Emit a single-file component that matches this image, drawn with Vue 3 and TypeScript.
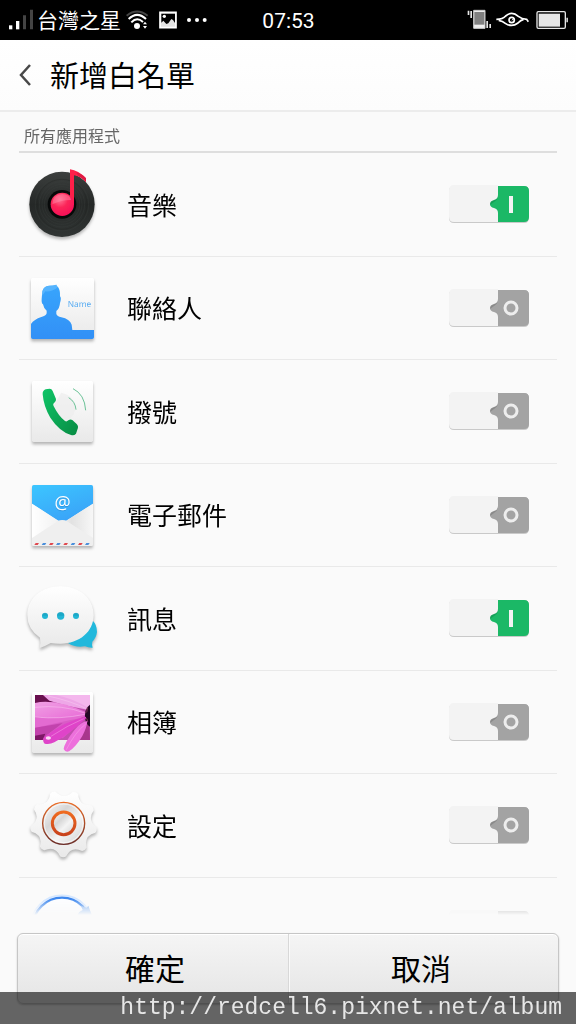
<script setup lang="ts">
import { ref } from 'vue'

type IconName = 'music' | 'contacts' | 'phone' | 'mail' | 'messages' | 'album' | 'settings' | 'browser'

interface AppEntry {
  icon: IconName
  name: string
  viewBox: string
  allowed: boolean
}

const apps = ref<AppEntry[]>([
  { icon: 'music', name: '音樂', viewBox: '9 15 264 264', allowed: true },
  { icon: 'contacts', name: '聯絡人', viewBox: '9 9 264 264', allowed: false },
  { icon: 'phone', name: '撥號', viewBox: '9 6 264 264', allowed: false },
  { icon: 'mail', name: '電子郵件', viewBox: '9 6 264 264', allowed: false },
  { icon: 'messages', name: '訊息', viewBox: '9 6 264 264', allowed: true },
  { icon: 'album', name: '相簿', viewBox: '9 6 264 264', allowed: false },
  { icon: 'settings', name: '設定', viewBox: '9 6 264 264', allowed: false },
  { icon: 'browser', name: '', viewBox: '9 318 264 264', allowed: false },
])

function polar(radius: number, degrees: number): string {
  const a = (degrees * Math.PI) / 180
  return `${(143 + radius * Math.cos(a)).toFixed(1)} ${(131 + radius * Math.sin(a)).toFixed(1)}`
}

function gearOutline(teeth: number): string {
  const step = 360 / teeth
  let d = `M${polar(99, 91 - 5)}`
  for (let i = 0; i < teeth; i++) {
    const tip = 91 + i * step
    d += `Q${polar(103, tip)} ${polar(99, tip + 5)}`
    d += `Q${polar(70, tip + step / 2)} ${polar(99, tip + step - 5)}`
  }
  return d + 'Z'
}

const gear = gearOutline(9)
const stamps = [62, 84, 106, 127, 149, 171, 193, 214]
</script>

<template>
  <div class="screen">
    <div class="status">
      <div class="status-side">
        <svg width="24" height="40" viewBox="27 0 72 120" aria-hidden="true">
          <path d="M27 76h10v12H27z" fill="#fff" />
          <path d="M48 63h10v25H48z" fill="#fff" />
          <path d="M69 46h9v42h-9zM90 29h9v59h-9z" fill="#444" />
        </svg>
        <span class="carrier">台灣之星</span>
        <svg width="24" height="40" viewBox="375 0 72 120" fill="none" aria-hidden="true">
          <path d="M380 47Q411 22 443 47" stroke="#444" stroke-width="6" />
          <path d="M386 57Q411 32 438 57" stroke="#fff" stroke-width="6" />
          <path d="M394 67Q411 49 429 66" stroke="#fff" stroke-width="6" />
          <circle cx="411" cy="78" r="9" fill="#fff" />
          <path d="M429 73l6-8 6 8zM429 78l6 8 6-8z" fill="#fff" />
        </svg>
        <svg width="28" height="40" viewBox="459 0 84 120" aria-hidden="true">
          <path d="M480 37h48v46h-48z" fill="#e4e4e4" stroke="#fff" stroke-width="5" />
          <path d="M484 41h41v28l-6-9-5-3-9 13-6 2-9-10-6 6z" fill="#000" />
          <circle cx="493" cy="49" r="5" fill="#fff" />
        </svg>
        <svg width="24" height="40" viewBox="555 0 72 120" fill="#fff" aria-hidden="true">
          <circle cx="567" cy="60" r="6" /><circle cx="591" cy="60" r="6" /><circle cx="614" cy="60" r="6" />
        </svg>
      </div>
      <time class="clock">07:53</time>
      <div class="status-side status-end">
        <svg width="26" height="40" viewBox="534 0 78 120" aria-hidden="true">
          <path d="M557 31h34v54h-34z" fill="#eee" stroke="#ccc" stroke-width="3" />
          <path d="M559 36h30v38h-30z" fill="#808080" />
          <path d="M539 32h5v13h-5zM547 33h5v21h-5zM595 63h5v21h-5zM604 72h5v12h-5z" fill="#e6e6e6" />
        </svg>
        <svg width="34" height="40" viewBox="624 0 102 120" fill="none" stroke="#fff" aria-hidden="true">
          <path d="M625 58Q645 58 653 48Q672 32 691 49Q701 57 716 58L721 65" stroke-width="5" />
          <path d="M632 61Q644 63 652 70Q671 83 690 69Q698 60 707 58" stroke-width="5" />
          <circle cx="671" cy="60" r="8" stroke-width="5" />
          <path d="M672 61l6-7" stroke-width="3" />
        </svg>
        <svg width="34" height="40" viewBox="738 0 102 120" aria-hidden="true">
          <rect x="747" y="35" width="85" height="50" rx="4" fill="#000" stroke="#e6e6e6" stroke-width="4" />
          <path d="M752 41h64v39h-64z" fill="#e6e6e6" />
          <path d="M835 53h5v14h-5z" fill="#ccc" />
        </svg>
      </div>
    </div>

    <header class="title-bar">
      <button class="back" type="button" aria-label="返回">
        <svg width="14" height="24" viewBox="0 0 14 24" fill="none" stroke="#484848" stroke-width="2.5" aria-hidden="true">
          <path d="M12 2L3 12L12 22" />
        </svg>
      </button>
      <h1>新增白名單</h1>
    </header>

    <main class="content">
      <h2>所有應用程式</h2>
      <ul class="apps">
        <li v-for="app in apps" :key="app.icon" class="app">
          <svg class="app-icon" width="88" height="88" :viewBox="app.viewBox" aria-hidden="true">
            <g v-if="app.icon === 'music'">
              <defs>
                <linearGradient id="vinyl" x1="0" y1="0" x2="0" y2="1">
                  <stop offset="0" stop-color="#3c3f3e" /><stop offset=".5" stop-color="#252827" /><stop offset="1" stop-color="#303433" />
                </linearGradient>
                <radialGradient id="ball" cx=".4" cy=".3" r=".75">
                  <stop offset="0" stop-color="#ff6f92" /><stop offset=".45" stop-color="#fb2558" /><stop offset="1" stop-color="#f50d57" />
                </radialGradient>
              </defs>
              <circle class="shadow" cx="138" cy="145" r="98" fill="url(#vinyl)" />
              <g fill="none" stroke="#3b3f3e">
                <circle cx="138" cy="145" r="80" /><circle cx="138" cy="145" r="75" stroke="#1d201f" />
                <circle cx="138" cy="145" r="68" /><circle cx="138" cy="145" r="60" /><circle cx="138" cy="145" r="53" />
              </g>
              <circle cx="138" cy="145" r="43" fill="#070909" />
              <path d="M162 40Q187 43 210 67V78Q194 61 174 58V145H162z" fill="#ff1f49" />
              <path d="M180 49Q197 53 210 67V78Q198 65 188 61z" fill="#df1a43" />
              <circle cx="139" cy="145" r="35" fill="url(#ball)" />
              <path d="M109 145Q109 116 139 114Q163 115 165 132Q136 132 109 145z" fill="#ff8eaa" opacity=".45" />
            </g>

            <g v-else-if="app.icon === 'contacts'">
              <defs>
                <linearGradient id="person" x1="0" y1="0" x2="0" y2="1">
                  <stop offset="0" stop-color="#38a5fc" /><stop offset="1" stop-color="#3290f6" />
                </linearGradient>
              </defs>
              <rect class="shadow" x="45" y="48" width="189" height="183" rx="5" fill="url(#paper)" />
              <path
                d="M45 186Q54 172 76 165Q90 162 92 154V146Q83 139 81 127Q76 124 77 110L79 88Q82 73 99 71Q111 71 121 68Q122 73 126 75Q133 84 132 103Q137 108 132 123Q131 139 121 147V156Q123 163 136 166Q161 171 167 188Q168 196 169 204H234V226Q234 231 229 231H50Q45 231 45 226z"
                fill="url(#person)"
              />
              <path d="M79 101Q76 73 99 71Q112 71 121 68Q122 73 126 75Q109 90 88 88z" fill="#65bdff" opacity=".65" />
              <text x="155" y="136" class="card-name">Name</text>
            </g>

            <g v-else-if="app.icon === 'phone'">
              <defs>
                <linearGradient id="handset" x1="0" y1="0" x2="1" y2="1">
                  <stop offset="0" stop-color="#10c568" /><stop offset="1" stop-color="#078b43" />
                </linearGradient>
              </defs>
              <rect class="shadow" x="48" y="45" width="183" height="183" rx="5" fill="url(#paper)" />
              <path d="M136 80Q170 87 178 118Q181 149 152 163Q121 149 112 121z" fill="#ececec" opacity=".7" />
              <path
                d="M89 70L101 68Q107 68 110 75L120 99Q121 105 115 110Q109 113 114 122Q128 150 147 165Q152 168 157 163Q163 158 169 162L182 174Q189 181 184 191L180 203Q174 210 165 207Q130 196 103 155Q83 122 80 85Q79 74 89 70z"
                fill="url(#handset)"
              />
              <g fill="none" stroke="#6cc398" stroke-width="3">
                <path d="M158 95Q178 107 180 131" /><path d="M171 68Q206 85 209 133" />
              </g>
            </g>

            <g v-else-if="app.icon === 'mail'">
              <defs>
                <linearGradient id="sky" x1="0" y1="0" x2="0.5" y2="1">
                  <stop offset="0" stop-color="#3cc6ff" /><stop offset="1" stop-color="#3aa3f8" />
                </linearGradient>
                <linearGradient id="flap" x1="0" y1="0" x2="1" y2="0">
                  <stop offset="0" stop-color="#fff" /><stop offset=".45" stop-color="#f1f1f1" /><stop offset=".65" stop-color="#e2e2e2" /><stop offset="1" stop-color="#f7f7f7" />
                </linearGradient>
              </defs>
              <rect class="shadow" x="48" y="45" width="183" height="183" rx="5" fill="#f2f2f2" />
              <path d="M53 45H226Q231 45 231 50V101L139 160L48 101V50Q48 45 53 45z" fill="url(#sky)" />
              <path d="M48 101L126 152H151L231 101V204H48z" fill="url(#flap)" />
              <path d="M48 204L126 153Q139 147 152 153L231 204V223Q231 228 226 228H53Q48 228 48 223z" fill="#efefef" />
              <text x="140" y="119" class="at-shadow">@</text>
              <text x="140" y="117" class="at">@</text>
              <path
                v-for="(x, i) in stamps"
                :key="x"
                :d="`M${x - 3} 219h10l-4 6h-10z`"
                :fill="i % 2 ? '#4a8fdb' : '#e0484e'"
              />
            </g>

            <g v-else-if="app.icon === 'messages'">
              <g class="shadow">
                <path d="M229 142Q243 155 243 177Q241 194 229 206Q227 216 230 224Q219 225 207 220Q178 225 156 210z" fill="#22b8dc" />
                <path d="M133 40C190 40 233 76 233 126C233 176 190 212 133 212Q117 212 104 210Q91 218 71 225Q75 211 72 194Q34 168 34 126C34 76 77 40 133 40z" fill="url(#paper)" />
              </g>
              <g fill="#22b6d5">
                <circle cx="87" cy="129" r="9" /><circle cx="134" cy="129" r="11" /><circle cx="180" cy="129" r="9" />
              </g>
              <path d="M78 128a9 9 0 0 1 18 0zM123 128a11 11 0 0 1 22 0zM171 128a9 9 0 0 1 18 0z" fill="#1796b5" opacity=".45" />
            </g>

            <g v-else-if="app.icon === 'album'">
              <defs>
                <linearGradient id="petal" x1="0" y1="0" x2="1" y2="1">
                  <stop offset="0" stop-color="#f0a0e4" /><stop offset="1" stop-color="#e86ad6" />
                </linearGradient>
                <clipPath id="photo"><path d="M57 54H222V189H57z" /></clipPath>
              </defs>
              <rect class="shadow" x="48" y="45" width="183" height="183" rx="5" fill="url(#paper)" />
              <g clip-path="url(#photo)">
                <path d="M57 54H222V189H57z" fill="#c14fae" />
                <path d="M57 54H84L112 74L57 80z" fill="#69104f" />
                <path d="M81 54H222V100Q160 90 100 71z" fill="#eea7e7" />
                <path d="M120 54Q176 66 217 93L222 78V54z" fill="#f4b7ed" />
                <path d="M57 78Q112 63 210 105L210 118Q116 130 57 121z" fill="url(#petal)" />
                <path d="M57 121Q110 128 212 113L150 147Q89 155 57 153z" fill="#e36bd1" />
                <path d="M57 153Q120 137 214 119L140 184L57 171z" fill="#d95cc6" />
                <path d="M57 152Q100 146 140 138L84 181L57 189z" fill="#c243ad" />
                <path d="M57 176L88 170L80 189H57z" fill="#7d1766" />
                <path d="M57 120Q132 128 206 112M57 91Q139 82 206 108M96 57Q163 71 216 97" fill="none" stroke="#fad1f3" stroke-width="2" opacity=".65" />
                <path d="M186 172Q206 155 219 130L222 189H176z" fill="#a8368d" />
                <path d="M222 83Q201 96 209 133Q214 145 222 149z" fill="#240925" />
                <path d="M208 108q6-1 6-16M207 120q7 3 8 14" fill="none" stroke="#8b315f" stroke-width="3" />
              </g>
              <path d="M210 119Q148 130 84 181Q78 192 86 200Q100 204 115 196Q158 174 210 124z" fill="#df44c9" />
              <path d="M214 132Q194 135 176 158Q145 197 143 216Q148 227 159 223Q179 211 199 177Q213 150 214 132z" fill="#ed70dc" />
              <path d="M209 141Q177 166 151 218M203 125Q153 146 105 178" fill="none" stroke="#f8afec" stroke-width="3" opacity=".45" />
              <ellipse cx="97" cy="183" rx="8" ry="5" fill="#fff" opacity=".8" />
            </g>

            <g v-else-if="app.icon === 'settings'">
              <defs>
                <linearGradient id="copper" x1="0" y1="0" x2="0" y2="1">
                  <stop offset="0" stop-color="#ed6d26" /><stop offset="1" stop-color="#6b2c27" />
                </linearGradient>
                <linearGradient id="ember" x1="0" y1="0" x2="0" y2="1">
                  <stop offset="0" stop-color="#ef6b20" /><stop offset="1" stop-color="#c9431c" />
                </linearGradient>
                <linearGradient id="steel" x1="0" y1="0" x2="1" y2="1">
                  <stop offset="0" stop-color="#fff" /><stop offset=".35" stop-color="#d6d6d6" /><stop offset=".6" stop-color="#f4f4f4" /><stop offset="1" stop-color="#cfcfcf" />
                </linearGradient>
              </defs>
              <path class="shadow" :d="gear" fill="url(#paper)" />
              <circle cx="143" cy="130" r="63" fill="url(#steel)" stroke="url(#copper)" stroke-width="4" />
              <circle cx="143" cy="130" r="58" fill="none" stroke="#fff" stroke-width="3" opacity=".65" />
              <circle cx="143" cy="130" r="34" fill="url(#steel)" stroke="url(#ember)" stroke-width="9" />
            </g>

            <g v-else>
              <circle cx="138" cy="440" r="94" fill="#fcfdff" stroke="#d5e7ff" stroke-width="5" />
              <circle cx="138" cy="440" r="87" fill="none" stroke="#3f88ee" stroke-width="7" />
              <path d="M190 396l10-6-5-12 17 5 5-6 10 27-45 4z" fill="#86b6f5" />
            </g>
          </svg>

          <label class="app-row" :for="`allow-${app.icon}`">
            <span class="app-name">{{ app.name }}</span>
            <span class="toggle">
              <input :id="`allow-${app.icon}`" v-model="app.allowed" type="checkbox" :aria-label="app.name || '應用程式'" />
              <svg width="84" height="43" viewBox="0 0 84 43" aria-hidden="true">
                <path d="M7 3H77Q82 3 82 8V35Q82 40 77 40H7Q2 40 2 35V8Q2 3 7 3z" fill="#c9c9c9" />
                <path d="M42 3H77Q82 3 82 8V34Q82 39 77 39H42z" :fill="app.allowed ? '#1bb866' : '#a3a3a3'" />
                <path d="M42 12H51Q51 17 47 19L43 22H42z" :fill="app.allowed ? '#15a058' : '#8a8a8a'" />
                <path d="M7 2H51V12Q51 16 47 17Q43 18 43 21Q43 24 47 25Q51 26 51 30V39H7Q2 39 2 34V7Q2 2 7 2z" fill="#f3f3f3" />
                <path v-if="app.allowed" d="M62 13H66V30H62z" fill="#f3f3f3" />
                <circle v-else cx="64" cy="21" r="6" fill="none" stroke="#ededed" stroke-width="3" />
              </svg>
            </span>
          </label>
        </li>
      </ul>
    </main>

    <footer class="actions">
      <button type="button">確定</button>
      <button type="button">取消</button>
    </footer>

    <div class="watermark">http://redcell6.pixnet.net/album</div>

    <svg class="shared-paint" width="0" height="0" aria-hidden="true">
      <defs>
        <linearGradient id="paper" x1="0" y1="0" x2="0" y2="1">
          <stop offset="0" stop-color="#fff" /><stop offset="1" stop-color="#e9e9e9" />
        </linearGradient>
      </defs>
    </svg>
  </div>
</template>

<style>
body {
  margin: 0;
  background: #fafafa;
}
</style>

<style scoped>
.screen {
  display: flex;
  flex-direction: column;
  height: 100vh;
  background: #fafafa;
  color: #000;
  font-family: Roboto, "Noto Sans CJK TC", sans-serif;
}

.status {
  display: grid;
  grid-template-columns: 1fr auto 1fr;
  align-items: center;
  height: 40px;
  flex: none;
  padding: 0 8px 0 9px;
  background: #000;
  color: #fff;
}

.status-side {
  display: flex;
  align-items: center;
  gap: 4px;
}

.status-end {
  justify-content: flex-end;
}

.status svg {
  flex: none;
}

.carrier,
.clock {
  padding-top: 2px;
  font-size: 21px;
  line-height: 38px;
  white-space: nowrap;
}

.title-bar {
  display: flex;
  align-items: center;
  flex: none;
  height: 70px;
  padding-left: 12px;
  border-bottom: 2px solid #ececec;
  background: linear-gradient(#fff, #fcfcfc);
}

.back {
  display: flex;
  padding: 8px 6px;
  border: 0;
  background: none;
}

h1 {
  margin: 0 0 0 12px;
  padding-top: 4px;
  font-size: 29px;
  line-height: 40px;
  font-weight: 400;
}

.content {
  flex: 1;
  min-height: 0;
  margin: 0 19px;
  overflow: hidden;
  -webkit-mask-image: linear-gradient(#000 calc(100% - 16px), transparent);
  mask-image: linear-gradient(#000 calc(100% - 16px), transparent);
}

h2 {
  margin: 0;
  padding: 11px 5px 0;
  border-bottom: 2px solid #dedede;
  color: #666;
  font-size: 16px;
  line-height: 28px;
  font-weight: 400;
}

.apps {
  margin: 0;
  padding: 0;
  list-style: none;
}

.app {
  display: flex;
  box-sizing: border-box;
  height: 104px;
  border-bottom: 1px solid #e9e9e9;
}

.app:nth-child(even) {
  height: 103px;
}

.app-icon {
  flex: none;
  margin-top: 8px;
  overflow: visible;
}

.shadow {
  filter: drop-shadow(0 7px 5px rgba(0, 0, 0, 0.28));
}

.card-name {
  fill: #58acf2;
  font-family: "Noto Sans", sans-serif;
  font-size: 25px;
  text-rendering: geometricPrecision;
}

.at,
.at-shadow {
  fill: #fff;
  font-family: "Open Sans", sans-serif;
  font-size: 54px;
  text-anchor: middle;
}

.at-shadow {
  fill: #2b83c9;
  opacity: 0.5;
}

.app-row {
  display: flex;
  flex: 1;
  align-items: center;
  justify-content: space-between;
  padding: 0 26px 0 20px;
}

.app-name {
  padding-top: 4px;
  font-size: 25px;
  line-height: 36px;
}

.toggle {
  position: relative;
  display: flex;
}

.toggle input {
  position: absolute;
  inset: 0;
  width: 100%;
  height: 100%;
  margin: 0;
  opacity: 0;
}

.actions {
  display: grid;
  grid-template-columns: 1fr 1fr;
  flex: none;
  margin: 18px 17px 20px;
  border: 1px solid #c6c6c6;
  border-radius: 6px;
  background: linear-gradient(#f5f5f5, #e5e5e5);
  box-shadow: inset 0 1px 0 #fff, 0 1px 2px rgba(0, 0, 0, 0.2);
}

.actions button {
  height: 69px;
  padding: 2px 0 0 4px;
  border: 0;
  background: none;
  color: #000;
  font-family: inherit;
  font-size: 30px;
  line-height: 40px;
}

.actions button + button {
  padding: 2px 5px 0 0;
  border-left: 1px solid #d8d8d8;
  box-shadow: inset 1px 0 0 #fafafa;
}

.watermark {
  position: fixed;
  right: 0;
  bottom: 0;
  left: 0;
  padding-right: 14px;
  background: rgba(0, 0, 0, 0.6);
  color: #e6e6e6;
  font-family: "Liberation Mono", monospace;
  font-size: 23px;
  line-height: 32px;
  text-align: right;
}

.shared-paint {
  position: absolute;
}
</style>
